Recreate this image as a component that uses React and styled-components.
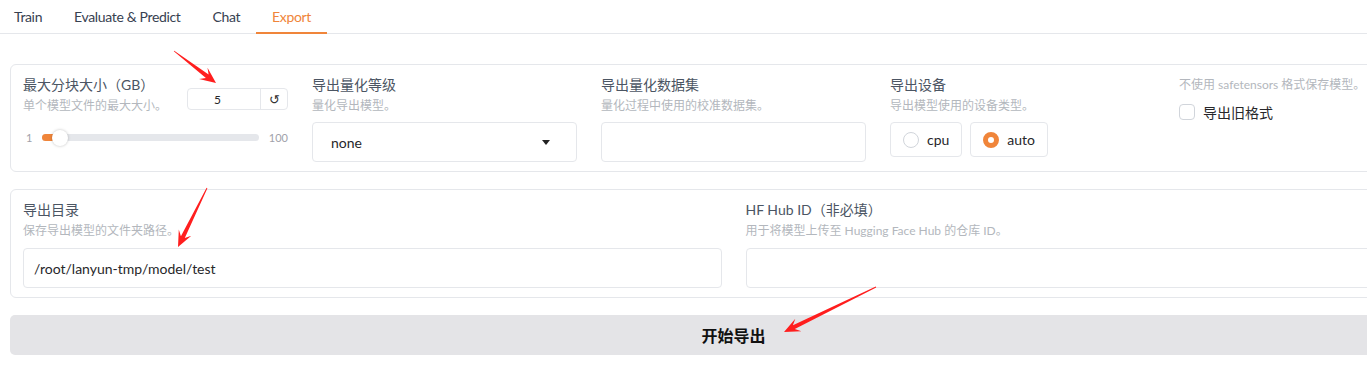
import React from 'react';
import styled, { createGlobalStyle } from 'styled-components';

const GlobalStyle = createGlobalStyle`
  html, body {
    margin: 0;
    padding: 0;
    background: #fff;
    overflow: hidden;
  }
  body {
    font-family: Lato, "Noto Sans CJK SC", sans-serif;
    color: #374151;
  }
`;

const ORANGE = '#f0853a';

const Page = styled.div`
  position: relative;
  width: 1447px;
  padding: 0 10px;
  display: flex;
  flex-direction: column;
`;

const TabBar = styled.div`
  display: flex;
  height: 33px;
  margin: 0 -10px;
  border-bottom: 1px solid #e5e7eb;
`;

const Tab = styled.div`
  display: flex;
  align-items: center;
  padding: 0 16px;
  font-size: 14px;
  letter-spacing: -0.35px;
  margin-bottom: -1px;
  color: ${p => (p.active ? ORANGE : '#374151')};
  border-bottom: 2px solid ${p => (p.active ? ORANGE : 'transparent')};
  &:first-child { margin-left: -2px; }
`;

const Panel = styled.div`
  margin-top: ${p => p.top}px;
  border: 1px solid #e5e7eb;
  border-radius: 6px;
  padding: 10px 12px 9px;
  display: grid;
  grid-template-columns: repeat(${p => p.cols}, 1fr);
  column-gap: 24px;
`;

const Field = styled.div`
  display: flex;
  flex-direction: column;
  min-width: 0;
`;

const Label = styled.div`
  font-size: 14px;
  line-height: 20px;
  color: #4b5563;
  white-space: nowrap;
`;

const Info = styled.div`
  font-size: 12px;
  line-height: 18px;
  margin-top: ${p => p.gap ?? 2}px;
  color: #b3b7bd;
  white-space: nowrap;
`;

const TextBox = styled.div`
  margin-top: ${p => p.gap ?? 7}px;
  height: 40px;
  box-sizing: border-box;
  border: 1px solid #e5e7eb;
  border-radius: 4px;
  display: flex;
  align-items: center;
  justify-content: space-between;
  padding: 0 ${p => (p.select ? 26 : 10)}px 0 ${p => (p.select ? 18 : 10)}px;
  font-size: 14px;
  color: #27272a;
`;

const Caret = styled.div`
  width: 0;
  height: 0;
  border-left: 4px solid transparent;
  border-right: 4px solid transparent;
  border-top: 5px solid #222;
`;

const HeadRow = styled.div`
  display: flex;
  justify-content: space-between;
  align-items: flex-start;
`;

const NumberBox = styled.div`
  margin-top: 13px;
  width: 101px;
  height: 22px;
  box-sizing: border-box;
  border: 1px solid #e5e7eb;
  border-radius: 4px;
  display: flex;
  font-size: 12px;
  color: #27272a;
`;

const NumberValue = styled.div`
  flex: 1;
  display: flex;
  align-items: center;
  padding-left: 26px;
`;

const ResetBtn = styled.div`
  width: 26px;
  border-left: 1px solid #e5e7eb;
  display: flex;
  align-items: center;
  justify-content: center;
  font-size: 13px;
  color: #333;
`;

const SliderRow = styled.div`
  margin-top: 16px;
  display: flex;
  align-items: center;
  gap: 10px;
  font-size: 11px;
  color: #a1a1aa;
  padding-left: 3px;
`;

const Track = styled.div`
  position: relative;
  flex: 1;
  height: 7px;
  border-radius: 4px;
  background: #e5e7eb;
`;

const TrackFill = styled.div`
  height: 100%;
  border-radius: 4px;
  background: ${ORANGE};
`;

const Thumb = styled.div`
  position: absolute;
  top: 50%;
  width: 16px;
  height: 16px;
  margin: -8px 0 0 -8px;
  border-radius: 50%;
  background: #fff;
  box-shadow: 0 0 3px rgba(0, 0, 0, 0.25);
`;

const RadioGroup = styled.div`
  margin-top: 7px;
  display: flex;
  gap: 8px;
`;

const RadioBox = styled.div`
  height: 35px;
  box-sizing: border-box;
  padding: 0 12px;
  border: 1px solid #e5e7eb;
  border-radius: 4px;
  display: flex;
  align-items: center;
  gap: 8px;
  font-size: 14px;
  color: #27272a;
`;

const RadioDot = styled.span`
  width: 16px;
  height: 16px;
  box-sizing: border-box;
  border-radius: 50%;
  border: ${p => (p.checked ? `5px solid ${ORANGE}` : '1px solid #d1d5db')};
  background: #fff;
`;

const CheckRow = styled.div`
  margin-top: 8px;
  display: flex;
  align-items: center;
  gap: 8px;
  font-size: 14px;
  color: #27272a;
`;

const CheckBox = styled.span`
  width: 16px;
  height: 16px;
  box-sizing: border-box;
  border: 1px solid #d1d5db;
  border-radius: 4px;
`;

const RunButton = styled.div`
  margin-top: 17px;
  height: 40px;
  border-radius: 5px;
  background: #e4e4e7;
  display: flex;
  align-items: center;
  justify-content: center;
  font-size: 16px;
  font-weight: 700;
  color: #111;
`;

const Overlay = styled.svg`
  position: absolute;
  left: 0;
  top: 0;
  pointer-events: none;
`;

function arrowPoints(tx, ty, px, py) {
  const len = Math.hypot(px - tx, py - ty);
  const dx = (px - tx) / len;
  const dy = (py - ty) / len;
  const nx = -dy;
  const ny = dx;
  const L = 16, W = 7;
  const bx = px - dx * L, by = py - dy * L;
  const sx = px - dx * (L - 5), sy = py - dy * (L - 5);
  const pts = [
    [tx + nx * 0.4, ty + ny * 0.4],
    [sx + nx * 2.2, sy + ny * 2.2],
    [bx + nx * W, by + ny * W],
    [px, py],
    [bx - nx * W, by - ny * W],
    [sx - nx * 2.2, sy - ny * 2.2],
    [tx - nx * 0.4, ty - ny * 0.4],
  ];
  return pts.map(p => p.map(v => v.toFixed(1)).join(',')).join(' ');
}

const arrows = [
  [174, 51, 216, 83],
  [207, 188, 178, 247],
  [876, 287, 784, 332],
];

const tabs = ['Train', 'Evaluate & Predict', 'Chat', 'Export'];

export default function App() {
  return (
    <>
      <GlobalStyle />
      <Page>
        <TabBar>
          {tabs.map(t => (
            <Tab key={t} active={t === 'Export'}>{t}</Tab>
          ))}
        </TabBar>

        <Panel top={30} cols={5}>
          <Field>
            <HeadRow>
              <div>
                <Label>最大分块大小（GB）</Label>
                <Info>单个模型文件的最大大小。</Info>
              </div>
              <NumberBox>
                <NumberValue>5</NumberValue>
                <ResetBtn>↺</ResetBtn>
              </NumberBox>
            </HeadRow>
            <SliderRow>
              <span>1</span>
              <Track>
                <TrackFill style={{ width: '8%' }} />
                <Thumb style={{ left: '8%' }} />
              </Track>
              <span>100</span>
            </SliderRow>
          </Field>

          <Field>
            <Label>导出量化等级</Label>
            <Info>量化导出模型。</Info>
            <TextBox select>
              none
              <Caret />
            </TextBox>
          </Field>

          <Field>
            <Label>导出量化数据集</Label>
            <Info>量化过程中使用的校准数据集。</Info>
            <TextBox />
          </Field>

          <Field>
            <Label>导出设备</Label>
            <Info>导出模型使用的设备类型。</Info>
            <RadioGroup>
              <RadioBox><RadioDot />cpu</RadioBox>
              <RadioBox><RadioDot checked />auto</RadioBox>
            </RadioGroup>
          </Field>

          <Field>
            <Info gap={1}>不使用 safetensors 格式保存模型。</Info>
            <CheckRow>
              <CheckBox />
              导出旧格式
            </CheckRow>
          </Field>
        </Panel>

        <Panel top={17} cols={2}>
          <Field>
            <Label>导出目录</Label>
            <Info>保存导出模型的文件夹路径。</Info>
            <TextBox gap={8}>/root/lanyun-tmp/model/test</TextBox>
          </Field>
          <Field>
            <Label>HF Hub ID（非必填）</Label>
            <Info>用于将模型上传至 Hugging Face Hub 的仓库 ID。</Info>
            <TextBox gap={8} />
          </Field>
        </Panel>

        <RunButton>开始导出</RunButton>

        <Overlay width="1367" height="368">
          {arrows.map((a, i) => (
            <polygon key={i} points={arrowPoints(...a)} fill="#ff1e1e" />
          ))}
        </Overlay>
      </Page>
    </>
  );
}
